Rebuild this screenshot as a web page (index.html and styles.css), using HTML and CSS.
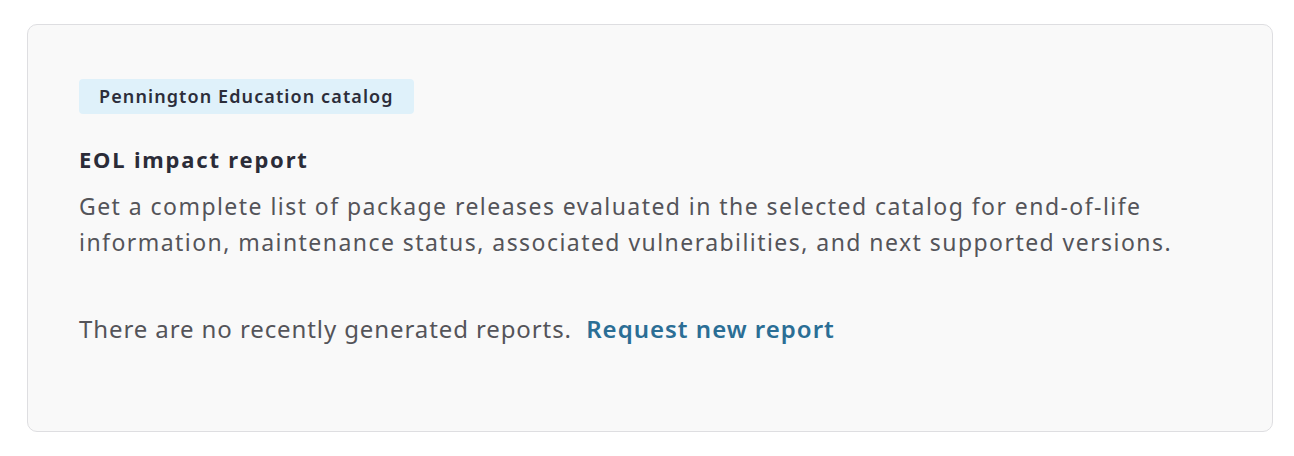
FILE: index.html
```html
<!DOCTYPE html>
<html>
<head>
<meta charset="utf-8">
<link rel="stylesheet" href="styles.css">
</head>
<body>
<div class="page">
  <section class="card">
    <span class="badge">Pennington Education catalog</span>
    <h2 class="title">EOL impact report</h2>
    <p class="desc">Get a complete list of package releases evaluated in the selected catalog for end-of-life information, maintenance status, associated vulnerabilities, and next supported versions.</p>
    <p class="status">There are no recently generated reports.&nbsp; <a class="link" href="#">Request new report</a></p>
  </section>
</div>
</body>
</html>
```
FILE: styles.css
```css
html, body {
  margin: 0;
  padding: 0;
  background: #ffffff;
}
body {
  font-family: "Noto Sans", "Open Sans", sans-serif;
}
.page {
  padding: 24px 21px 24px 27px;
}
.card {
  display: flex;
  flex-direction: column;
  align-items: flex-start;
  background: #f9f9f9;
  border: 1px solid #dedee1;
  border-radius: 10px;
  padding: 54px 51px 60px 51px;
  min-height: 292px;
}
.badge {
  display: inline-block;
  background: #dff1fa;
  color: #2c2d3a;
  font-weight: 600;
  font-size: 18px;
  letter-spacing: 1.1px;
  line-height: 35px;
  padding: 0 20px;
  border-radius: 4px;
}
.title {
  margin: 29px 0 0 0;
  font-size: 22px;
  font-weight: 700;
  letter-spacing: 1.8px;
  color: #2b2c38;
  line-height: 32px;
}
.desc {
  margin: 13px 0 0 0;
  font-size: 23px;
  letter-spacing: 1.45px;
  line-height: 36px;
  color: #545459;
}
.status {
  margin: 51px 0 0 0;
  font-size: 24px;
  letter-spacing: 0.9px;
  line-height: 36px;
  color: #545459;
}
.link {
  color: #2b6e95;
  font-weight: 600;
  letter-spacing: 1px;
  text-decoration: none;
}
```
